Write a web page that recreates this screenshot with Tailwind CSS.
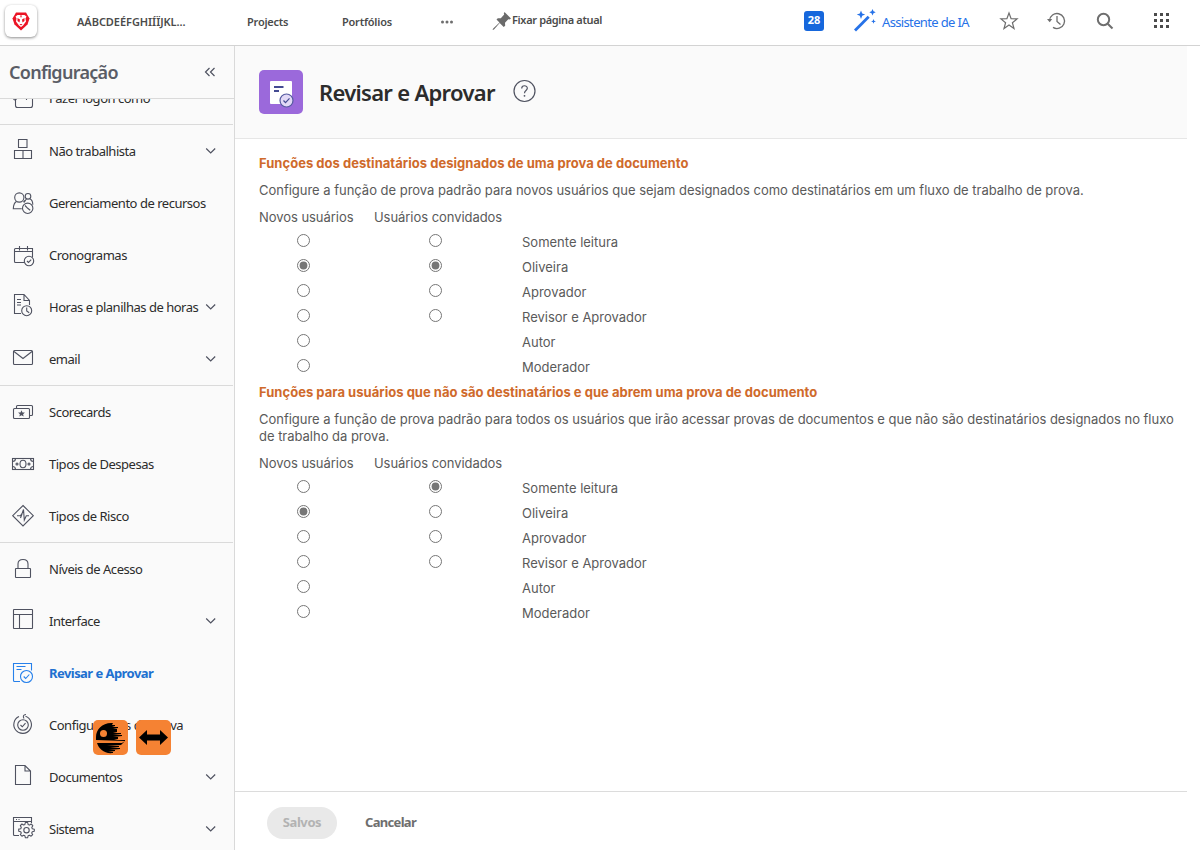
<!DOCTYPE html>
<html lang="pt-BR">
<head>
<meta charset="utf-8">
<title>Revisar e Aprovar</title>
<script src="https://cdn.jsdelivr.net/npm/@tailwindcss/browser@4"></script>
</head>
<body class="w-[1200px] h-[850px] overflow-hidden bg-white font-['Noto_Sans',sans-serif] text-[#2c2c2c]">
<div class="relative flex h-full flex-col">
  <header class="flex h-[46px] shrink-0 items-center border-b border-[#d3d3d3] bg-white text-[11px] font-semibold text-[#4b4b4b]">
    <div class="ml-[5px] mb-[3px] flex size-8 items-center justify-center rounded-md bg-white shadow-[0_1px_3px_rgba(0,0,0,0.45)]">
      <svg class="size-5" viewBox="0 0 20 20"><path d="M5 1.500h10l3.500 6-2 6L10 19.500l-6.500-6-2-6z" fill="#eb1425"/><path d="M4.500 5.500l2-1.500h7l2 1.500-1 2 .5 3-3 4-2 1.500-2-1.500-3-4 .5-3z" fill="#fff"/><path d="M6.500 7l2.500 1.500-.5 3L6.500 10zM13.500 7L11 8.500l.5 3 2-1.500zM8.500 13h3L10 14.500zM9 4.500h2L10 7z" fill="#eb1425"/></svg>
    </div>
    <span class="ml-10 w-[170px] whitespace-nowrap tracking-[-0.05px]">AÁBCDEÉFGHIÍÏJKL...</span>
    <span class="w-[95px] whitespace-nowrap tracking-[-0.22px]">Projects</span>
    <span class="w-[98px] whitespace-nowrap tracking-[-0.22px]">Portfólios</span>
    <svg class="h-4 w-[14px]" viewBox="0 0 14 16" fill="#6e6e6e"><circle cx="2.500" cy="7" r="1.500"/><circle cx="7" cy="7" r="1.500"/><circle cx="11.500" cy="7" r="1.500"/></svg>
    <div class="ml-[38px] mb-1 flex items-center">
      <svg class="h-5 w-5" viewBox="0 0 20 20" fill="#6b6b6b"><path d="M12.500 1L19 7.500l-1.500 1-1.200-.3-3.300 3.500.2 3-1.500 1.300-4-4L2 18.500l-1.500.6.700-1.500L7.500 11.500 4.500 8.500l1.300-1.300 3 .1 3.400-3.700-.4-1.100z"/></svg>
      <span class="whitespace-nowrap tracking-[-0.35px]">Fixar página atual</span>
    </div>
    <div class="ml-auto flex h-full items-center">
      <span class="mb-1 flex size-5 items-center justify-center rounded-[3px] bg-[#1667dc] text-[11px] font-bold text-white">28</span>
      <svg class="ml-[29px] mb-1 size-6" viewBox="0 0 24 24" fill="#2672e8"><path d="M14.700 6.700l2 2L3 22.500l-2-2z"/><path d="M8 1.500l1.200 3 3 1.100-3 1.200L8 10 6.800 6.800l-3-1.200 3-1.100zM19.500 0l1 2.300 2.200 1-2.200 1-1 2.300-1-2.300-2.200-1 2.200-1zM20.500 10l.7 1.700 1.700.7-1.700.7-.7 1.700-.7-1.700-1.700-.7 1.700-.7z"/></svg>
      <span class="ml-[5px] w-[117px] whitespace-nowrap text-[13px] font-normal tracking-[-0.65px] text-[#2672e8]">Assistente de IA</span>
      <svg class="mb-1 size-5" viewBox="0 0 20 20" fill="none" stroke="#6e6e6e" stroke-width="1.200"><path d="M10 2l2.100 5.700 6 .2-4.700 3.800 1.600 5.800-5-3.400-5 3.400 1.600-5.800L1.900 7.900l6-.2z"/></svg>
      <svg class="ml-[28px] mb-1 size-5" viewBox="0 0 20 20" fill="none" stroke="#6e6e6e" stroke-width="1.300"><path d="M2.500 9.500A7.500 7.500 0 1 1 6 16.400"/><path d="M10 5v5.500l3.500 3"/><path d="M0 8h5.200L2.700 11.200z" fill="#6e6e6e" stroke="none"/></svg>
      <svg class="ml-[28px] mb-1 size-5" viewBox="0 0 20 20" fill="none" stroke="#6e6e6e" stroke-width="2"><circle cx="8.500" cy="8.500" r="5.700"/><path d="M12.700 12.700L17.500 17.500"/></svg>
      <svg class="ml-[37px] mr-[28px] mb-1 size-5" viewBox="0 0 20 20" fill="#4b4b4b"><path d="M2 2h3v3H2zM8 2h3v3H8zM14 2h3v3h-3zM2 8h3v3H2zM8 8h3v3H8zM14 8h3v3h-3zM2 14h3v3H2zM8 14h3v3H8zM14 14h3v3h-3z"/></svg>
    </div>
  </header>
  <div class="flex min-h-0 flex-1">
    <aside class="flex w-[235px] shrink-0 flex-col border-r border-[#d9d9d9] bg-[#fafafa]">
      <div class="flex h-[53px] shrink-0 items-center justify-between border-b border-[#dadada] pl-[9px] pr-[18px]">
        <h2 class="whitespace-nowrap text-[18px] font-semibold tracking-[-0.7px] text-[#5a5d66]">Configuração</h2>
        <svg class="size-3" viewBox="0 0 12 12" fill="none" stroke="#4f5260" stroke-width="1.200"><path d="M5.500 2L1.500 6l4 4M10.500 2l-4 4 4 4"/></svg>
      </div>
      <div class="min-h-0 flex-1 overflow-hidden">
        <nav id="nav" class="-mt-[27px] text-[13px] tracking-[-0.48px] text-[#2c2c2c]"></nav>
      </div>
    </aside>
    <main class="flex w-[952px] flex-col text-[13px] text-[#5a5a5a]">
      <div class="flex h-[93px] shrink-0 items-center border-b border-[#e6e6e6] bg-[#fafafa] pl-6">
        <div class="flex size-11 items-center justify-center rounded-[5px] bg-[#9b69db]">
          <svg class="size-11" viewBox="0 0 44 44"><rect x="11" y="11" width="22" height="23" rx="1" fill="#fff"/><path d="M15 17h9.500M15 21h5" stroke="#444b92" stroke-width="2"/><circle cx="27.500" cy="30.500" r="6.500" fill="#e2d9f6" stroke="#555aa0" stroke-width="1.200"/><path d="M24.500 30.500l2 2.200 4-4.400" fill="none" stroke="#444b92" stroke-width="1.200"/></svg>
        </div>
        <h1 class="ml-4 w-[177px] whitespace-nowrap text-[22px] font-semibold tracking-[-0.7px] text-[#2c2c2c]">Revisar e Aprovar</h1>
        <svg class="ml-4 mb-[3px] size-6" viewBox="0 0 24 24" fill="none" stroke="#4f5260" stroke-width="1.200"><circle cx="12.500" cy="12" r="10.500"/><path d="M9.700 9.500c0-3.600 5.600-3.600 5.600-.2 0 2.300-2.800 2.200-2.800 4.900"/><circle cx="12.500" cy="16.800" r=".9" fill="#4f5260" stroke="none"/></svg>
      </div>
      <div class="flex-1 px-6 pt-4 font-['Inter',sans-serif]">
        <h3 class="leading-[17px] font-bold tracking-[0.03px] text-[#cf6a2b]">Funções dos destinatários designados de uma prova de documento</h3>
        <p class="mt-[10px] leading-[17px] tracking-[-0.02px]">Configure a função de prova padrão para novos usuários que sejam designados como destinatários em um fluxo de trabalho de prova.</p>
        <div id="assigned" class="mt-[10px]"></div>
        <h3 class="mt-[5px] leading-[17px] font-bold tracking-[0.03px] text-[#cf6a2b]">Funções para usuários que não são destinatários e que abrem uma prova de documento</h3>
        <p class="mt-[10px] leading-[17px] whitespace-nowrap tracking-[-0.02px]">Configure a função de prova padrão para todos os usuários que irão acessar provas de documentos e que não são destinatários designados no fluxo<br>de trabalho da prova.</p>
        <div id="others" class="mt-[10px]"></div>
      </div>
      <div class="flex h-[59px] shrink-0 items-center border-t border-[#dcdcdc] pl-8 font-bold">
        <button class="mt-1 flex h-8 w-[70px] items-center justify-center rounded-full bg-[#e9e9e9] tracking-[-0.4px] text-[#b3b3b3]">Salvos</button>
        <button class="mt-1 ml-7 tracking-[-0.68px] text-[#6e6e6e]">Cancelar</button>
      </div>
    </main>
  </div>
  <div class="absolute left-[93px] top-[720px] flex gap-2">
    <svg class="size-[35px]" viewBox="0 0 35 35"><rect width="35" height="35" rx="5" fill="#f58233"/><path d="M20 3C10 2 3 9 3 17v3l29 1-3 2H4c2 6 7 11 16 10v-1h-5l7-1v-1h-6l11-1v-1H17l9-1v-1H14l14-1 4-4v-1H21l4-1v-2h-5l9-1v-1H20l8-1v-1h-8l4-1V9h-4l5-1V7h-6l3-1V5h-3z" fill="#000"/><circle cx="10.500" cy="13.500" r="3.500" fill="#f58233"/><path d="M4 22h22" stroke="#f58233"/></svg>
    <svg class="size-[35px]" viewBox="0 0 35 35"><rect width="35" height="35" rx="5" fill="#f58233"/><path d="M3 17.500L11 10v4.500h13V10l8 7.500-8 7.500v-4.500H11V25z" fill="#000"/></svg>
  </div>
</div>
<script>
const icons = {
  login: '<path d="M4.500 14v7.500q0 2 2 2h13q2 0 2-2V13M2.500 15q1.500 2 3 0M15.500 12v4"/>',
  boxes: '<path d="M7.500 2.500h8.500v8H7.500zM3.500 13.500h17v8h-17zM12 13.500v8"/>',
  people: '<circle cx="8.300" cy="8.500" r="4.600"/><path d="M5.500 12.500Q2.500 14 2.300 19.800h8.500M14 11.500l-1.500 1.500"/><circle cx="17" cy="7.300" r="2.800"/><path d="M15.500 9.800l-2.500 3.700M18.800 9.700q3 1.300 3 6"/><circle cx="16.700" cy="19.300" r="5.200"/><path d="M14 16.500l2.700 2.800 2.500 2"/>',
  calendar: '<path d="M13 21.500H4.500q-1 0-1-1v-12q0-1 1-1h17v8.500M3.500 10.500h18M8.500 5v4.500M16.500 5v4.500"/><circle cx="18" cy="20" r="4.700"/><path d="M16 20l1.500 1.500 2.700-2.800"/>',
  timesheet: '<path d="M10 20.500H3.500v-19H13l5.500 6v4.500M13 1.500v6h5.500M6 6.500h4M6 9.500h4M6 12h4"/><circle cx="15.700" cy="17.700" r="5"/><path d="M15.700 14.500v3.500l2.500 1.800"/>',
  mail: '<rect x="2.500" y="5.500" width="19" height="14" rx="1"/><path d="M3 6.500l9 7 9-7"/>',
  cards: '<path d="M5.500 10V8.500q0-1 1-1h14q1 0 1 1v8q0 1-1 1h-2"/><rect x="2.500" y="10.500" width="16" height="10" rx="1"/><path d="M10.500 12.200l1 2.300 2.400.1-1.800 1.600.6 2.400-2.200-1.300-2.200 1.300.6-2.400-1.800-1.600 2.400-.1z" fill="#4f5260" stroke="none"/>',
  money: '<rect x="1.500" y="8.500" width="21" height="11"/><ellipse cx="12" cy="14" rx="3" ry="3.700"/><circle cx="6" cy="14" r="1"/><circle cx="18" cy="14" r="1"/><path d="M1.500 11.500q3 0 3-3M22.500 11.500q-3 0-3-3M1.500 16.500q3 0 3 3M22.500 16.500q-3 0-3 3"/>',
  risk: '<path d="M12 3.500l10.300 10.200L12 24 1.700 13.700z"/><path d="M6 13.700h3.500l1.500-2 1.500-4.200.8 10.500 2-4.300h2.700M11 12l-1.500 4"/>',
  lock: '<rect x="4.500" y="13.500" width="15" height="9" rx=".5"/><path d="M7 13.500V9q0-4.500 5-4.500T17 9v4.500"/>',
  layout: '<rect x="2.500" y="2.500" width="19" height="19" rx=".5"/><path d="M2.500 7.500h19M8.500 7.500v14"/>',
  review: '<path d="M9 22.500H3.500q-1 0-1-1v-17h18v7M5.500 7.500h9M5.500 10.500h5"/><circle cx="15.500" cy="17.500" r="6"/><path d="M12.700 17.500l2 2 3.600-4"/>',
  proof: '<path d="M14.500 5.300A8.800 8.800 0 1 1 8 5.600M13 7.500Q11 4 15 3.500"/><circle cx="12" cy="14" r="5.300"/><path d="M9.500 14l1.800 1.800 3.200-3.600"/>',
  doc: '<path d="M14 2.500H4.500v19h15V8zM14 2.500V8h5.500"/>',
  system: '<path d="M8 20.500H3.500q-1 0-1-1v-17h18V8M2.500 6.500h18M5 4.500h1M7.500 4.500h1"/><path transform="translate(0 -1)" d="M14.300 8.500h2.400l.4 2 1.300.6 1.800-1.100 1.600 1.700-1 1.800.5 1.200 2 .5v2l-2 .5-.6 1.300 1 1.700-1.600 1.500-1.700-1-1.300.6-.5 2h-2.200l-.5-2-1.300-.6-1.700 1-1.600-1.500 1-1.800-.6-1.200-2-.5v-2.100l2-.4.6-1.300-1-1.800 1.600-1.600 1.700 1 1.300-.5z" stroke-linejoin="round"/><circle cx="15.500" cy="15.200" r="2.700"/>'
};
const groups = [
  [['login', 'Fazer logon como']],
  [['boxes', 'Não trabalhista', 1], ['people', 'Gerenciamento de recursos'], ['calendar', 'Cronogramas'], ['timesheet', 'Horas e planilhas de horas', 1], ['mail', 'email', 1]],
  [['cards', 'Scorecards'], ['money', 'Tipos de Despesas'], ['risk', 'Tipos de Risco']],
  [['lock', 'Níveis de Acesso'], ['layout', 'Interface', 1], ['review', 'Revisar e Aprovar', 0, 1], ['proof', 'Configurações de prova'], ['doc', 'Documentos', 1], ['system', 'Sistema', 1]]
];
document.getElementById('nav').innerHTML = groups.map(g => `<ul class="mr-px border-b border-[#dadada]">${g.map(([i, t, open, on]) => `
  <li class="flex h-[52px] items-center pl-[11px] pr-[17px] ${on ? 'font-bold tracking-[-0.55px] text-[#2070d0]' : ''}">
    <svg class="mb-1 size-6 shrink-0 overflow-visible" viewBox="0 0 24 24" fill="none" stroke="${on ? '#2680eb' : '#4f5260'}" stroke-width="1.100">${icons[i]}</svg>
    <span class="ml-[14px] mt-[2px] whitespace-nowrap">${t}</span>
    ${open ? '<svg class="ml-auto h-2 w-[11px] shrink-0" viewBox="0 0 11 8" fill="none" stroke="#4f5260" stroke-width="1.200"><path d="M1.200 1.500l4.500 4.500L10.200 1.500"/></svg>' : ''}
  </li>`).join('')}</ul>`).join('');

const roles = ['Somente leitura', 'Oliveira', 'Aprovador', 'Revisor e Aprovador', 'Autor', 'Moderador'];
function table(id, a, b) {
  const radio = (n, on) => `<input type="radio" name="${id + n}" class="m-0 size-[13px] accent-[#767676]" ${on ? 'checked' : ''}>`;
  document.getElementById(id).innerHTML = `
  <div class="grid grid-cols-[115px_148px_auto] leading-[17px] tracking-[-0.05px]"><div>Novos usuários</div><div>Usuários convidados</div></div>
  <div class="pt-[3px]">${roles.map((r, i) => `
  <div class="grid h-[25px] grid-cols-[115px_148px_auto]">
    <div class="pl-[38px] pt-[5px] leading-none">${radio('new', i === a)}</div>
    <div class="pl-[55px] pt-[5px] leading-none">${i < 4 ? radio('guest', i === b) : ''}</div>
    <div class="pt-[5px] leading-[17px]">${r}</div>
  </div>`).join('')}</div>`;
}
table('assigned', 1, 1);
table('others', 1, 0);
</script>
</body>
</html>
